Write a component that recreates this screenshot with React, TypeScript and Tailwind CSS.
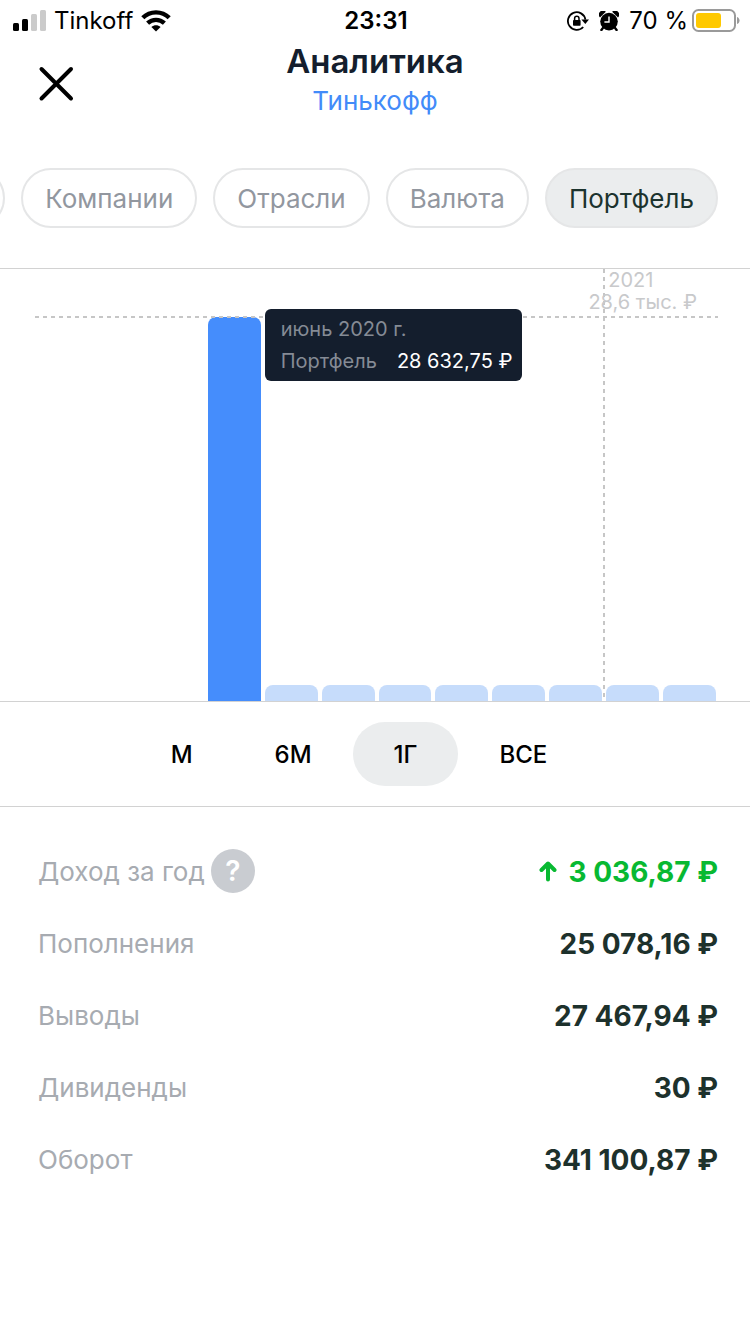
import { useState } from "react";
import clsx from "clsx";

const TABS = ["Компании", "Отрасли", "Валюта", "Портфель"];
const PERIODS = ["М", "6М", "1Г", "ВСЕ"];

/** Высота столбца по месяцам, в процентах от области графика. */
const BARS = [0, 0, 0, 88.9, 3.7, 3.7, 3.7, 3.7, 3.7, 3.7, 3.7, 3.7];
const SELECTED_BAR = 3;
const NEW_YEAR_BAR = 10;

const STATS = [
  { label: "Доход за год", value: "3 036,87 ₽", gain: true },
  { label: "Пополнения", value: "25 078,16 ₽" },
  { label: "Выводы", value: "27 467,94 ₽" },
  { label: "Дивиденды", value: "30 ₽" },
  { label: "Оборот", value: "341 100,87 ₽" },
];

function SignalIcon() {
  return (
    <svg width="34" height="22" viewBox="0 0 34 22" aria-hidden="true">
      <rect x="1" y="13" width="6" height="8" rx="1.5" />
      <rect x="10" y="9" width="6" height="12" rx="1.5" />
      <rect x="19" y="4" width="6" height="17" rx="1.5" fill="#cbcbcb" />
      <rect x="28" y="0" width="6" height="21" rx="1.5" fill="#cbcbcb" />
    </svg>
  );
}

function WifiIcon() {
  return (
    <svg width="30" height="22" viewBox="0 0 30 22" fill="none" stroke="#000" strokeWidth="4.4" aria-hidden="true">
      <path d="M1.8 7.8 C9 0.6 21 0.6 28.2 7.8" />
      <path d="M6.6 13.2 C11.4 8.8 18.6 8.8 23.4 13.2" />
      <path d="M10.4 17 C13 14.8 17 14.8 19.6 17 L15 21.6 Z" fill="#000" stroke="none" />
    </svg>
  );
}

function RotationLockIcon() {
  return (
    <svg width="22" height="20" viewBox="0 0 22 20" fill="none" stroke="#000" aria-hidden="true">
      <path d="M16.2 16 A8.8 8.8 0 1 1 18.4 8.6" strokeWidth="1.8" />
      <path d="M14.4 8.4 H22 L18.3 13 Z" fill="#000" stroke="none" />
      <rect x="6" y="9" width="7.6" height="5.8" rx="0.8" fill="#000" stroke="none" />
      <path d="M7.6 9.5 V7.4 A2.2 2.2 0 0 1 12 7.4 V9.5" strokeWidth="1.5" />
    </svg>
  );
}

function AlarmIcon() {
  return (
    <svg width="20" height="20" viewBox="0 0 20 20" aria-hidden="true">
      <circle cx="10" cy="10.6" r="8.8" />
      <path d="M1 6.4 A3.4 3.4 0 0 1 6.8 0.8 Z" />
      <path d="M19 6.4 A3.4 3.4 0 0 0 13.2 0.8 Z" />
      <path d="M4.2 16.6 L2.4 19 M15.8 16.6 L17.6 19" stroke="#000" strokeWidth="2.4" strokeLinecap="round" />
      <path d="M10 5.4 V11 H5.4" fill="none" stroke="#fff" strokeWidth="1.4" />
    </svg>
  );
}

function BatteryIcon() {
  return (
    <svg width="48" height="24" viewBox="0 0 48 24" aria-hidden="true">
      <rect x="1" y="1" width="42" height="21" rx="5.5" fill="none" stroke="#9a9a9a" strokeWidth="2" />
      <rect x="4" y="4" width="25" height="15" rx="3" fill="#ffc900" />
      <path d="M45 8 C48.4 9 48.4 14 45 15 Z" fill="#9a9a9a" />
    </svg>
  );
}

function StatusBar() {
  return (
    <div className="grid grid-cols-3 items-center h-10 pt-0.5 pl-3 pr-2.5 text-2xl text-black">
      <div className="flex items-center gap-2">
        <SignalIcon />
        <span>Tinkoff</span>
        <WifiIcon />
      </div>
      <time className="text-center font-semibold">23:31</time>
      <div className="flex items-center justify-end gap-2.5">
        <RotationLockIcon />
        <AlarmIcon />
        <span className="flex items-center gap-1 whitespace-nowrap">
          70 %
          <BatteryIcon />
        </span>
      </div>
    </div>
  );
}

function Header() {
  return (
    <header className="relative flex flex-col items-center h-22 text-center">
      <button type="button" aria-label="Закрыть" className="absolute top-6 left-9 p-0.5">
        <svg width="36" height="36" viewBox="0 0 36 36" fill="none" stroke="#000" strokeWidth="4" strokeLinecap="round">
          <path d="M3.5 3 L33 32.5 M33 3 L3.5 32.5" />
        </svg>
      </button>
      <h1 className="text-[33px] leading-[42px] font-semibold text-[#141e2d]">Аналитика</h1>
      <a href="#tinkoff" className="text-[26px] leading-[38px] text-[#428bf9]">
        Тинькофф
      </a>
    </header>
  );
}

function Tooltip() {
  return (
    <div className="absolute left-full top-0 z-10 ml-1 -mt-2 py-1 pl-4 pr-2.5 rounded-md bg-[#141e2d] text-xl leading-8 whitespace-nowrap text-[#858b95]">
      <div>июнь 2020 г.</div>
      <div className="flex justify-between gap-5">
        <span>Портфель</span>
        <span className="text-white">28 632,75 ₽</span>
      </div>
    </div>
  );
}

function Chart() {
  return (
    <section aria-label="График портфеля" className="relative flex items-end gap-1 h-[434px] pl-[37px] pr-[34px] border-y border-[#d2d2d2]">
      {BARS.map((height, i) => (
        <div key={i} className="relative flex-1 h-full flex flex-col justify-end">
          <div
            className={clsx("relative rounded-t-lg", i === SELECTED_BAR ? "bg-[#458dfc]" : "bg-[#c6dcfb]")}
            style={{ height: `${height}%` }}
          >
            {i === SELECTED_BAR && <Tooltip />}
          </div>
          {i === NEW_YEAR_BAR && (
            <>
              <svg className="absolute top-0 -left-[3px] w-0.5 h-full" aria-hidden="true">
                <line x1="1" y1="0" x2="1" y2="100%" stroke="#c6c6c6" strokeWidth="2" strokeDasharray="4 4" />
              </svg>
              <div className="absolute top-0 left-0.5 text-xl leading-[22px] text-[#c8c9cb]">2021</div>
            </>
          )}
        </div>
      ))}
      <div className="absolute inset-x-0 top-[47px] pl-[35px] pr-8">
        <svg className="block w-full h-0.5" aria-hidden="true">
          <line x1="0" y1="1" x2="100%" y2="1" stroke="#c6c6c6" strokeWidth="2" strokeDasharray="4 4" />
        </svg>
      </div>
      <div className="absolute top-[22px] right-[53px] text-xl leading-[22px] text-[#c8c9cb]">28,6 тыс. ₽</div>
    </section>
  );
}

export default function App() {
  const [tab, setTab] = useState("Портфель");
  const [period, setPeriod] = useState("1Г");

  return (
    <main className="min-h-screen overflow-x-hidden bg-white font-['Inter','Liberation_Sans',sans-serif]">
      <StatusBar />
      <Header />

      <nav className="flex justify-end gap-4 pt-10 pb-10 pr-8 overflow-hidden">
        <button type="button" aria-label="Предыдущий раздел" className="shrink-0 w-40 h-15 rounded-full border-2 border-[#e5e6e7]" />
        {TABS.map((name) => (
          <button
            key={name}
            type="button"
            onClick={() => setTab(name)}
            className={clsx(
              "shrink-0 h-15 px-[22px] rounded-full border-2 border-[#e5e6e7] text-[26px]",
              tab === name ? "bg-[#ebedee] text-[#1c332e]" : "text-[#92979f]"
            )}
          >
            {name}
          </button>
        ))}
      </nav>

      <Chart />

      <div className="flex justify-center py-5 pr-8 border-b border-[#d2d2d2]">
        {PERIODS.map((name) => (
          <button
            key={name}
            type="button"
            onClick={() => setPeriod(name)}
            className={clsx(
              "h-16 px-[41px] pt-0.5 rounded-full text-2xl font-medium text-black",
              period === name && "bg-[#ebedee]"
            )}
          >
            {name}
          </button>
        ))}
      </div>

      <dl className="pt-7 pl-[38px] pr-8">
        {STATS.map((stat) => (
          <div key={stat.label} className="flex items-center justify-between h-18">
            <dt className="flex items-center gap-1.5 text-[26px] text-[#a7abb1]">
              {stat.label}
              {stat.gain && (
                <button type="button" aria-label="Подробнее" className="size-11 rounded-full bg-[#c9ccd1] text-[28px] font-semibold text-white">
                  ?
                </button>
              )}
            </dt>
            <dd
              className={clsx(
                "flex items-center gap-3 pt-0.5 text-[28px] font-bold",
                stat.gain ? "text-[#08b932]" : "text-[#1d312c]"
              )}
            >
              {stat.gain && (
                <svg width="18" height="22" viewBox="0 0 18 22" fill="none" stroke="currentColor" strokeWidth="4" strokeLinecap="round" strokeLinejoin="round" aria-hidden="true">
                  <path d="M9 18.5 V3.5 M2.5 9 L9 2.5 L15.5 9" />
                </svg>
              )}
              {stat.value}
            </dd>
          </div>
        ))}
      </dl>
    </main>
  );
}
